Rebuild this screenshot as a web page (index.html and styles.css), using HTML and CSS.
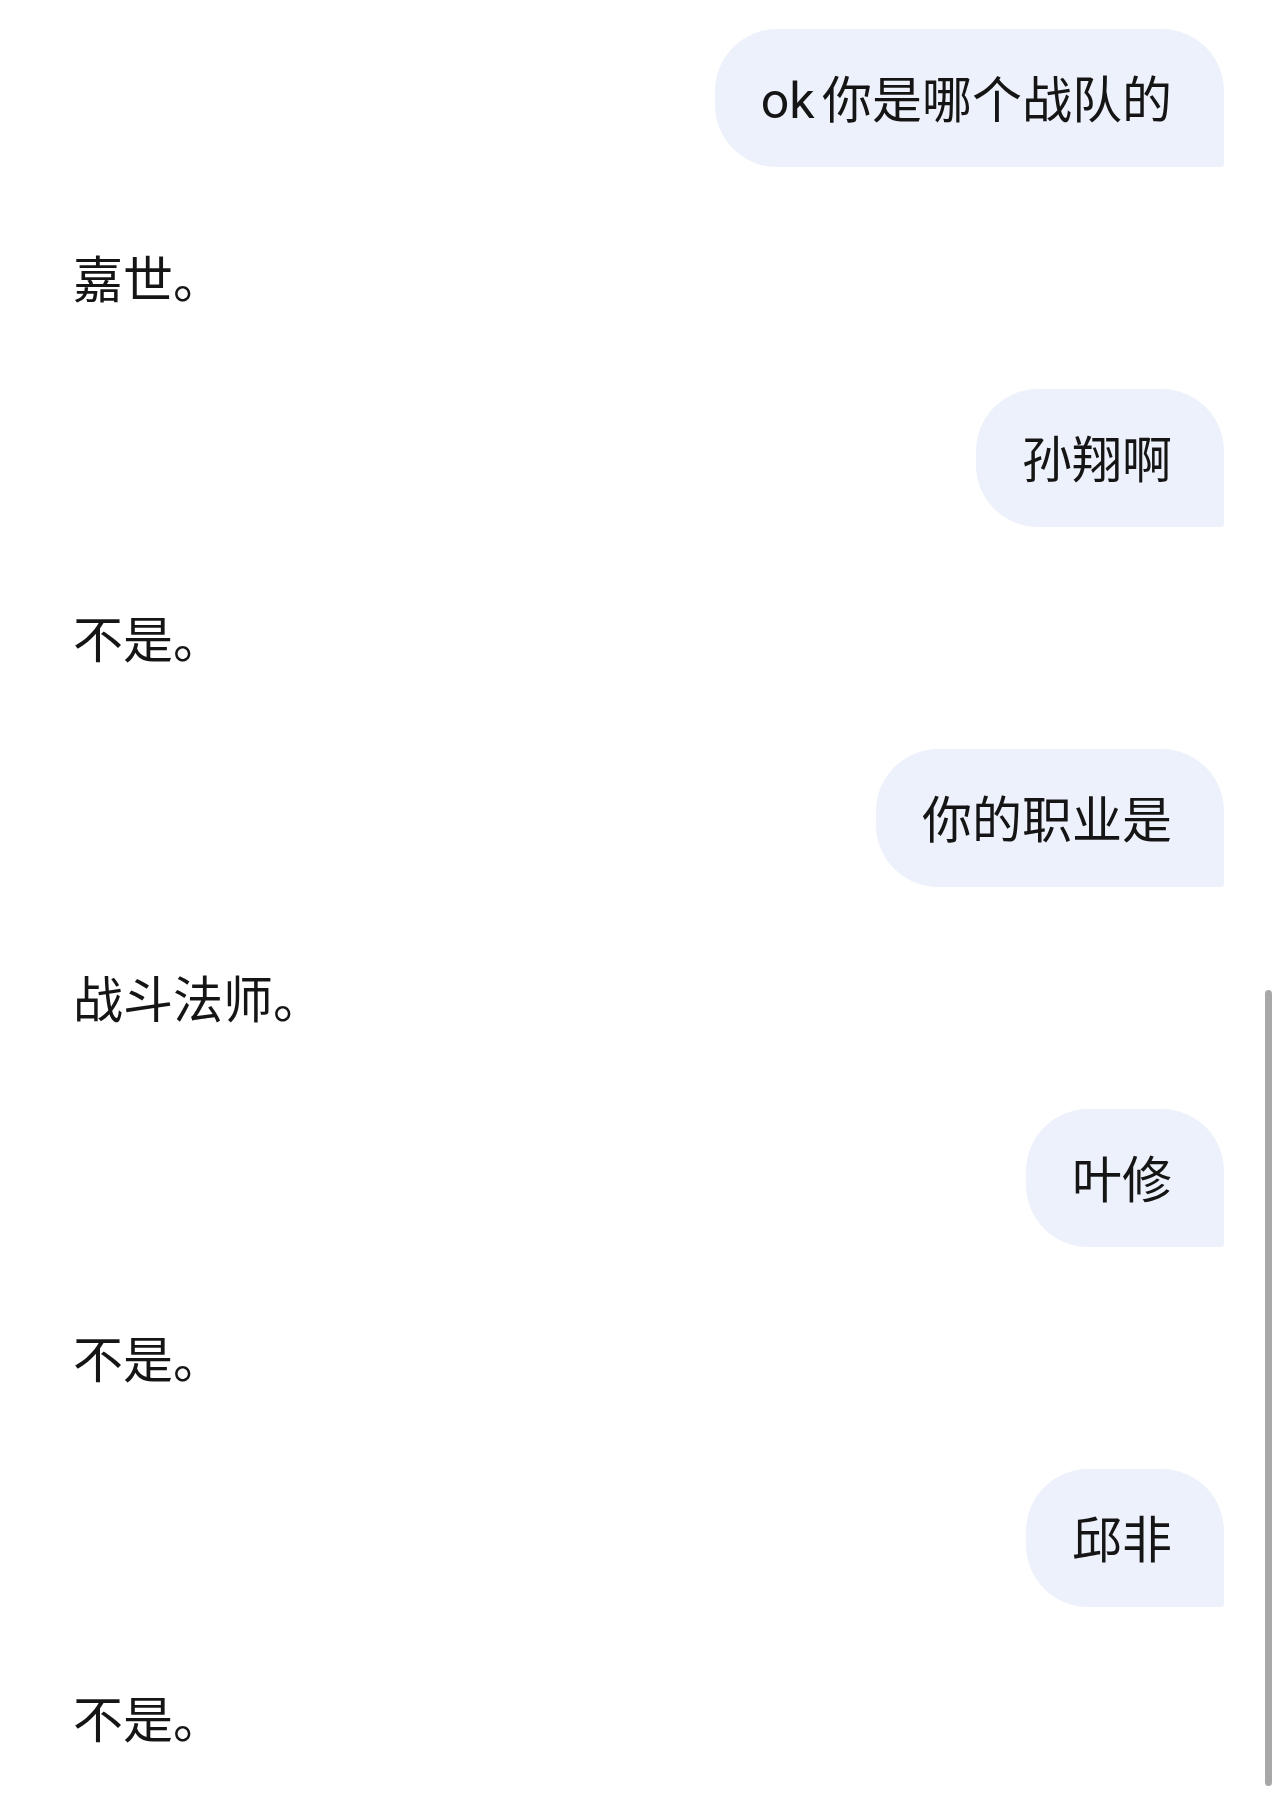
FILE: index.html
```html
<!DOCTYPE html>
<html lang="zh-CN">

<head>
    <meta charset="UTF-8">
    <meta name="viewport" content="width=device-width, initial-scale=1.0">
    <title>对话</title>
    <link rel="stylesheet" href="styles.css">
</head>

<body>

    <div class="chat">
        <div class="msg user"><div class="bubble">ok 你是哪个战队的</div></div>
        <div class="msg bot">嘉世。</div>

        <div class="msg user"><div class="bubble">孙翔啊</div></div>
        <div class="msg bot">不是。</div>

        <div class="msg user"><div class="bubble">你的职业是</div></div>
        <div class="msg bot">战斗法师。</div>

        <div class="msg user"><div class="bubble">叶修</div></div>
        <div class="msg bot">不是。</div>

        <div class="msg user"><div class="bubble">邱非</div></div>
        <div class="msg bot">不是。</div>
    </div>

    <!-- scroll thumb floating over the page -->
    <div class="scroll-thumb"></div>

</body>

</html>
```

FILE: styles.css
```css
body {
    margin: 0;
    background-color: #fff;
    font-family: Roboto, "Noto Sans CJK SC", sans-serif;
    color: #151515;
}

.chat {
    display: flex;
    flex-direction: column;
    gap: 76px;
    padding: 29px 60px 40px 73px;
}

.msg {
    font-size: 50px;
    line-height: 72px;
}

.user {
    display: flex;
    justify-content: flex-end;
}

.bubble {
    background-color: #edf1fb;
    padding: 36px 52px 30px 46px;
    border-radius: 62px 62px 4px 62px;
    word-spacing: -5px;
}

.bot {
    margin-top: 2px;
    margin-bottom: -4px;
}

.scroll-thumb {
    position: absolute;
    left: 1265px;
    top: 990px;
    width: 7px;
    height: 796px;
    border-radius: 4px;
    background-color: #a8a8a8;
}
```
